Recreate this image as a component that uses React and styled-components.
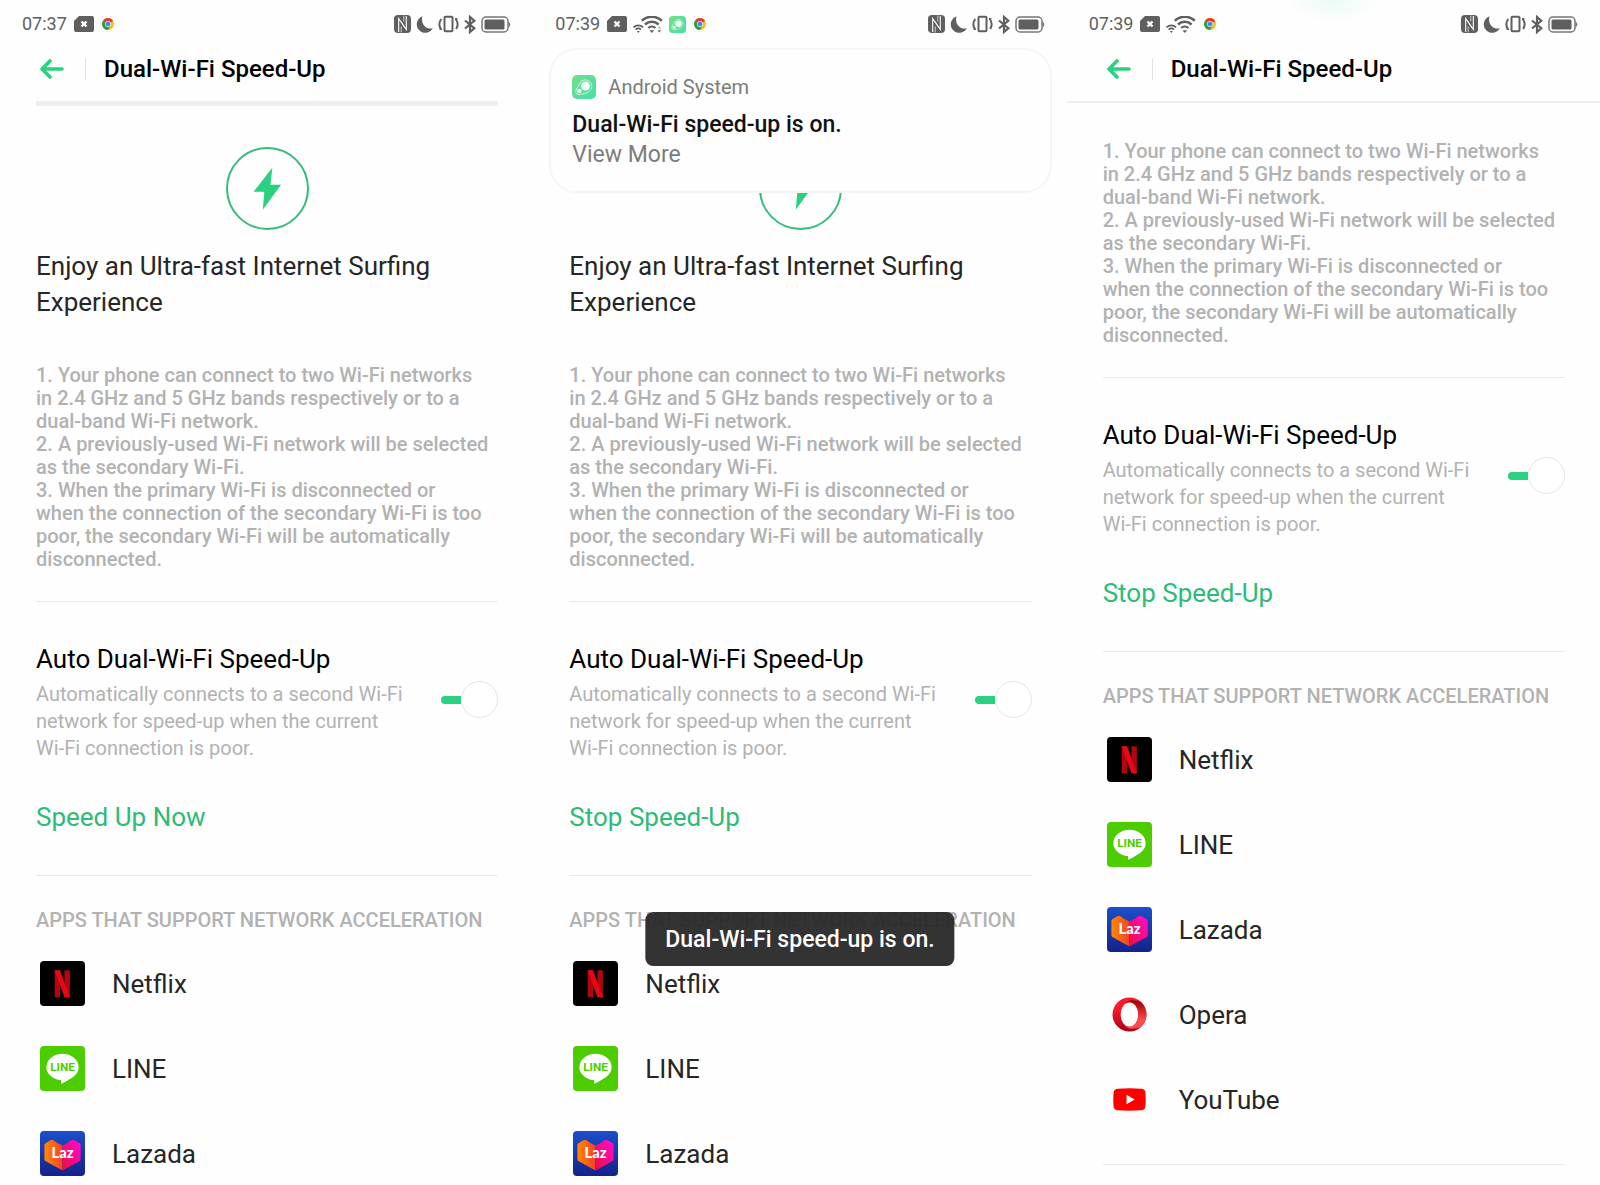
import React from "react";
import styled, { createGlobalStyle, css } from "styled-components";

const GlobalStyle = createGlobalStyle`
  * {
    box-sizing: border-box;
  }

  body {
    margin: 0;
    background: #fefefe;
    color: #000;
    font-family: Roboto, "Liberation Sans", sans-serif;
  }

  h1, h2, h3, p, ul {
    margin: 0;
    padding: 0;
    font-weight: 400;
  }

  button {
    padding: 0;
    border: 0;
    background: none;
    font-family: inherit;
    cursor: pointer;
  }

  svg {
    display: block;
    flex: none;
  }
`;

const Page = styled.main`
  display: grid;
  grid-template-columns: repeat(3, minmax(0, 1fr));
`;

const Screen = styled.section`
  position: relative;
  min-width: 0;
`;

const StatusBar = styled.div`
  display: flex;
  align-items: center;
  justify-content: space-between;
  height: 48px;
  padding: 0 22px;
  color: #5f5f5f;

  ${({ $glow }) =>
    $glow &&
    css`
      background: radial-gradient(48px 22px at 50% 0, #ebfbf4, #fefefe);
    `}
`;

const StatusLeft = styled.div`
  display: flex;
  align-items: center;
  gap: 6px;
`;

const StatusRight = styled.div`
  display: flex;
  align-items: center;
  gap: 5px;
`;

const Clock = styled.time`
  margin-right: 1px;
  font-size: 18px;
  line-height: 24px;
`;

const AppBar = styled.header`
  display: flex;
  align-items: center;
  height: 53px;
  padding: 0 36px 12px 39px;
`;

const BackButton = styled.button`
  display: flex;
  align-items: center;
  padding-right: 21px;
  border-right: 1px solid #e2e2e2;
  height: 22px;
  margin-right: 18px;
`;

const AppTitle = styled.h1`
  font-size: 24px;
  font-weight: 500;
  line-height: 28px;
`;

const BarRule = styled.div`
  height: ${({ $wide }) => ($wide ? "2px" : "5px")};
  margin: ${({ $wide }) => ($wide ? "0" : "0 35px 0 36px")};
  background: #eee;
`;

const Content = styled.div`
  padding: ${({ $scrolled }) => ($scrolled ? "36px" : "41px")} 35px 0 36px;
`;

const Hero = styled.div`
  display: flex;
  flex-direction: column;
  align-items: center;
  gap: 18px;
  margin-bottom: 43px;
`;

const HeroTitle = styled.h2`
  align-self: stretch;
  color: #262626;
  font-size: 26px;
  line-height: 36px;
`;

const Notes = styled.p`
  padding-top: 1px;
  padding-bottom: 30px;
  color: #b2b2b2;
  font-size: 20px;
  font-weight: 500;
  line-height: 23px;
  white-space: pre-line;
`;

const SpeedSection = styled.div`
  padding: 39px 0 40px;
  border: solid #e9e9e9;
  border-width: 1px 0;
`;

const SettingRow = styled.label`
  display: flex;
  align-items: center;
  justify-content: space-between;
  margin-bottom: 37px;
`;

const SettingText = styled.span`
  display: flex;
  flex-direction: column;
  gap: 4px;
`;

const SettingName = styled.span`
  font-size: 26px;
  line-height: 36px;
`;

const SettingHint = styled.span`
  color: #b2b2b2;
  font-size: 20px;
  line-height: 27px;
  white-space: pre-line;
`;

const Toggle = styled.input.attrs({ type: "checkbox" })`
  appearance: none;
  display: flex;
  align-items: center;
  flex: none;
  width: 57px;
  height: 35px;
  margin: 0 0 4px;

  &::before {
    content: "";
    flex: 1;
    height: 8px;
    border-radius: 4px 0 0 4px;
    background: #2ad181;
  }

  &::after {
    content: "";
    width: 35px;
    height: 35px;
    border: 1px solid #e4e4e4;
    border-radius: 50%;
    background: #fff;
  }
`;

const ActionButton = styled.button`
  display: block;
  color: #2dbb78;
  font-size: 26px;
  line-height: 36px;
`;

const ListTitle = styled.h3`
  padding-top: 31px;
  margin-bottom: 27px;
  color: #b2b2b2;
  font-size: 20px;
  font-weight: 500;
  line-height: 27px;
  white-space: nowrap;
`;

const AppList = styled.ul`
  display: flex;
  flex-direction: column;
  gap: 40px;
  padding: 0 4px;
  list-style: none;
`;

const AppRow = styled.li`
  display: flex;
  align-items: center;
  gap: 27px;
  height: 45px;
  color: #262626;
  font-size: 26px;
  line-height: 36px;
`;

const EndRule = styled.div`
  height: 1px;
  margin-top: 42px;
  background: #e9e9e9;
`;

const NotificationCard = styled.aside`
  position: absolute;
  top: 48px;
  left: 16px;
  right: 15px;
  height: 145px;
  padding: 24px 21px;
  border: 2px solid #f5f5f5;
  border-radius: 28px;
  background: #fefefe;
`;

const NotificationSource = styled.div`
  display: flex;
  align-items: center;
  gap: 12px;
  margin-bottom: 10px;
  color: #7c7c7c;
  font-size: 20px;
  line-height: 26px;
`;

const NotificationTitle = styled.p`
  color: #111;
  font-size: 23px;
  font-weight: 500;
  line-height: 30px;
`;

const MoreLink = styled.a`
  display: block;
  color: #7c7c7c;
  font-size: 23px;
  line-height: 30px;
  text-decoration: none;
`;

const Toast = styled.div`
  position: absolute;
  top: 912px;
  left: 50%;
  transform: translateX(-50%);
  padding: 13px 20px 11px;
  border-radius: 8px;
  background: rgba(40, 40, 40, 0.95);
  color: #fff;
  font-size: 23px;
  font-weight: 500;
  line-height: 30px;
  white-space: nowrap;
`;

/* ---------- status icons ---------- */

const SimIcon = () => (
  <svg width="20" height="16" viewBox="0 0 20 16">
    <path d="M5 0H18a2 2 0 0 1 2 2V14a2 2 0 0 1-2 2H2a2 2 0 0 1-2-2V5Z" fill="#5f5f5f" />
    <path d="M7.5 5.5l5 5M12.5 5.5l-5 5" stroke="#fff" strokeWidth="2.4" />
  </svg>
);

const WifiIcon = ({ active }) => (
  <svg width="30" height="17" viewBox="0 0 30 17" fill="none" stroke="#5f5f5f">
    <path d="M8.800 4.800a14.500 14.500 0 0 1 20 0" strokeWidth="2.600" />
    <path d="M12 8.500a9.800 9.800 0 0 1 13.600 0" strokeWidth="2.500" />
    <path d="M15.200 12a5.200 5.200 0 0 1 7.200 0" strokeWidth="2.300" />
    <path d="M16.400 14.200h4.800l-2.400 2.800Z" fill="#5f5f5f" stroke="none" />
    <path d="M.5 11.400a6.800 6.800 0 0 1 9.600 0M2.600 13.600a4 4 0 0 1 5.400 0" strokeWidth="1.600" />
    <path d="M3.800 15h3L5.300 16.900Z" fill="#5f5f5f" stroke="none" />
    {active && <path d="M24.600 12.400l1.800-2 1.800 2Z" fill="#aaa" stroke="none" />}
    {active && <path d="M24.600 14.200h3.600l-1.800 2.300Z" fill="#5f5f5f" stroke="none" />}
  </svg>
);

const ChromeIcon = () => (
  <svg width="16" height="16" viewBox="0 0 16 16">
    <rect x=".5" y=".5" width="15" height="15" rx="3" fill="#fff" stroke="#f6f6f6" />
    <circle cx="8" cy="8" r="6" fill="#fbc116" />
    <path d="M8 8L2.800 5A6 6 0 0 1 13.200 5Z" fill="#e33b2e" />
    <path d="M8 8L2.800 5A6 6 0 0 0 8 14L10.600 9.500Z" fill="#2a9c4a" />
    <circle cx="8" cy="8" r="2.900" fill="#e4ecf8" />
    <circle cx="8" cy="8" r="2.300" fill="#4285f4" />
  </svg>
);

const SystemIcon = ({ size }) => (
  <svg width={size} height={size} viewBox="0 0 24 24">
    <defs>
      <linearGradient id="system-green" x1="0" y1="0" x2="1" y2="1">
        <stop offset="0" stopColor="#74de86" />
        <stop offset="1" stopColor="#45dfaa" />
      </linearGradient>
    </defs>
    <rect width="24" height="24" rx="5" fill="url(#system-green)" />
    <path
      d="M9.500 5.900C13 3.700 18.800 5.400 19.700 9.900c.9 4.300-2.600 7.300-6 8.200l-5.500 1.400C4.700 20 3 17.300 4.300 14.300Z"
      fill="none"
      stroke="#c9f7dc"
      strokeWidth="1"
    />
    <circle cx="13.500" cy="11" r="4.500" fill="#f2fff7" />
    <circle cx="7.300" cy="15.900" r="2.200" fill="#f2fff7" />
  </svg>
);

const NfcIcon = () => (
  <svg width="17" height="18" viewBox="0 0 17 18">
    <rect width="17" height="18" rx="4" fill="#5f5f5f" />
    <path
      d="M4.700 17V3.500L10.700 12.500M12.300 1V14.500L6.800 6.200"
      fill="none"
      stroke="#fefefe"
      strokeWidth="1.100"
    />
    <path d="M7.200 17.500V11.500M9.800 .5V6.500" stroke="#fefefe" strokeWidth=".7" />
  </svg>
);

const MoonIcon = () => (
  <svg width="17" height="17" viewBox="0 0 17 17">
    <path d="M6.500.3A8.500 8.500 0 1 0 16.800 12.300C10.500 14 4.300 8 6.500.3Z" fill="#5f5f5f" />
  </svg>
);

const VibrateIcon = () => (
  <svg width="21" height="18" viewBox="0 0 21 18" fill="none" stroke="#5f5f5f" strokeWidth="2">
    <rect x="6.500" y="1.800" width="8" height="14.400" rx="1" />
    <path d="M3.300 4C1 7 1 11 2.800 14M17.700 4c2.300 3 2.300 7 .5 10" />
    <path d="M1.600 14.200h2.400M17 3.800h2.400" strokeWidth="1.600" />
  </svg>
);

const BluetoothIcon = () => (
  <svg width="12" height="19" viewBox="0 0 12 19" fill="none" stroke="#5f5f5f" strokeWidth="2.200">
    <path d="M1 5.500L10.300 13.200 6 17V2l4.300 3.800L1 13.500" />
  </svg>
);

const BatteryIcon = () => (
  <svg width="30" height="17" viewBox="0 0 30 17">
    <rect x="1" y="1" width="26" height="15" rx="4" fill="none" stroke="#767676" strokeWidth="1.500" />
    <rect x="3.500" y="3.500" width="20" height="10" rx="1.500" fill="#5f5f5f" />
    <path d="M28 6.500q1.600 2 0 4Z" fill="#767676" stroke="#767676" />
  </svg>
);

const BackArrow = () => (
  <svg width="25" height="20" viewBox="0 0 25 20">
    <path
      d="M11 2L3 10l8 8M3.500 10H23"
      fill="none"
      stroke="#2ad181"
      strokeWidth="3.600"
      strokeLinecap="round"
      strokeLinejoin="round"
    />
  </svg>
);

const BoltBadge = () => (
  <svg width="83" height="83" viewBox="0 0 83 83">
    <circle cx="41.500" cy="41.500" r="40.500" fill="none" stroke="#35bb7c" strokeWidth="2" />
    <path d="M46.300 20.800L44.500 37.800H55.100L36.800 62.800 38.300 44.800H27.600Z" fill="#2ad181" />
  </svg>
);

/* ---------- app logos ---------- */

const NetflixLogo = () => (
  <svg width="45" height="45" viewBox="0 0 46 46">
    <rect width="46" height="46" rx="4" fill="#000" />
    <rect x="15" y="9.500" width="5.500" height="27.500" fill="#b1060f" />
    <rect x="25" y="9.500" width="5.500" height="27.500" fill="#b1060f" />
    <rect
      x="20"
      y="9.500"
      width="5.500"
      height="27.500"
      fill="#e50914"
      transform="translate(-8.450 0) skewX(20)"
    />
  </svg>
);

const LineLogo = () => (
  <svg width="45" height="45" viewBox="0 0 46 46">
    <rect width="46" height="46" rx="4" fill="#4ccd00" />
    <ellipse cx="23" cy="21.500" rx="16.500" ry="13.500" fill="#fff" />
    <path d="M21 34c1 1 .8 2.500.4 4.500C27 36.500 33 32.500 36.500 28.500L22 31Z" fill="#fff" />
    <text
      x="23"
      y="26"
      textAnchor="middle"
      fill="#4ccd00"
      fontFamily="Roboto"
      fontSize="12"
      fontWeight="700"
    >
      LINE
    </text>
  </svg>
);

const LazadaLogo = () => (
  <svg width="45" height="45" viewBox="0 0 46 46">
    <defs>
      <linearGradient id="laz-bg" x1="0" y1="0" x2="0" y2="1">
        <stop offset="0" stopColor="#1b4fc9" />
        <stop offset="1" stopColor="#14228a" />
      </linearGradient>
      <linearGradient id="laz-left" x1="0" y1="0" x2="1" y2="0">
        <stop offset="0" stopColor="#ff8a00" />
        <stop offset="1" stopColor="#f4402a" />
      </linearGradient>
      <linearGradient id="laz-right" x1="0" y1="1" x2="1" y2="0">
        <stop offset="0" stopColor="#ee0a3f" />
        <stop offset="1" stopColor="#ff0cd0" />
      </linearGradient>
    </defs>
    <rect width="46" height="46" rx="4" fill="url(#laz-bg)" />
    <path d="M23 14.800Q18.500 13.500 13.500 9.200 12 8.700 10.500 9.500L5.500 12.500Q4.500 13.200 4.500 14.500V29Q4.500 30 5.500 30.700L23 40.500Z" fill="url(#laz-left)" />
    <path d="M23 14.800Q27.500 13.500 32.500 9.200 34 8.700 35.500 9.500L40.500 12.500Q41.500 13.200 41.500 14.500V29Q41.500 30 40.500 30.700L23 40.500Z" fill="url(#laz-right)" />
    <text
      x="23"
      y="28"
      textAnchor="middle"
      fill="#fff"
      fontFamily="Lato"
      fontSize="15"
      fontWeight="900"
    >
      Laz
    </text>
  </svg>
);

const OperaLogo = () => (
  <svg width="45" height="45" viewBox="0 0 45 45">
    <defs>
      <linearGradient id="opera-ring" x1="0" y1="0" x2="0" y2="1">
        <stop offset="0.300" stopColor="#fa1a2c" />
        <stop offset="1" stopColor="#a70014" />
      </linearGradient>
      <linearGradient id="opera-lobe" x1="0" y1="0" x2="0" y2="1">
        <stop offset="0" stopColor="#9c0000" />
        <stop offset="0.700" stopColor="#ff4b4b" />
      </linearGradient>
    </defs>
    <path
      d="M22.500 5.500a17 17 0 1 0 0 34a17 17 0 1 0 0-34ZM22.500 10.300a8.800 12.200 0 1 1 0 24.400a8.800 12.200 0 1 1 0-24.400Z"
      fill="url(#opera-ring)"
      fillRule="evenodd"
    />
    <path
      d="M16.500 13C19 9.500 22 8.300 25 8.300 28.500 8.300 31.500 9 34 10A17 17 0 0 1 34 35C31.500 36 28.500 36.700 25 36.700 22 36.700 19 35.500 16.500 32 18 34 20 34.700 22.500 34.700A8.800 12.200 0 0 0 22.500 10.300C20 10.300 18 11 16.500 13Z"
      fill="url(#opera-lobe)"
    />
  </svg>
);

const YouTubeLogo = () => (
  <svg width="45" height="45" viewBox="0 0 46 46">
    <path
      d="M11 11.900Q23 11 35 11.900 39 12.200 39.300 16 39.900 23 39.300 30 39 33.800 35 34.100 23 35 11 34.100 7 33.800 6.700 30 6.100 23 6.700 16 7 12.200 11 11.900Z"
      fill="#f00"
    />
    <path d="M20 18.200L28.300 23 20 27.800Z" fill="#fff" />
  </svg>
);

const APPS = [
  { name: "Netflix", Logo: NetflixLogo },
  { name: "LINE", Logo: LineLogo },
  { name: "Lazada", Logo: LazadaLogo },
  { name: "Opera", Logo: OperaLogo },
  { name: "YouTube", Logo: YouTubeLogo },
];

const NOTES = `1. Your phone can connect to two Wi-Fi networks
in 2.4 GHz and 5 GHz bands respectively or to a
dual-band Wi-Fi network.
2. A previously-used Wi-Fi network will be selected
as the secondary Wi-Fi.
3. When the primary Wi-Fi is disconnected or
when the connection of the secondary Wi-Fi is too
poor, the secondary Wi-Fi will be automatically
disconnected.`;

const HINT = `Automatically connects to a second Wi-Fi
network for speed-up when the current
Wi-Fi connection is poor.`;

const Status = ({ time, wifi, active, system, glow }) => (
  <StatusBar $glow={glow}>
    <StatusLeft>
      <Clock>{time}</Clock>
      <SimIcon />
      {wifi && <WifiIcon active={active} />}
      {system && <SystemIcon size={17} />}
      <ChromeIcon />
    </StatusLeft>
    <StatusRight>
      <NfcIcon />
      <MoonIcon />
      <VibrateIcon />
      <BluetoothIcon />
      <BatteryIcon />
    </StatusRight>
  </StatusBar>
);

const TopBar = () => (
  <AppBar>
    <BackButton type="button" aria-label="Back">
      <BackArrow />
    </BackButton>
    <AppTitle>Dual-Wi-Fi Speed-Up</AppTitle>
  </AppBar>
);

const Settings = ({ scrolled, action, count }) => (
  <Content $scrolled={scrolled}>
    {!scrolled && (
      <Hero>
        <BoltBadge />
        <HeroTitle>Enjoy an Ultra-fast Internet Surfing Experience</HeroTitle>
      </Hero>
    )}
    <Notes>{NOTES}</Notes>
    <SpeedSection>
      <SettingRow>
        <SettingText>
          <SettingName>Auto Dual-Wi-Fi Speed-Up</SettingName>
          <SettingHint>{HINT}</SettingHint>
        </SettingText>
        <Toggle defaultChecked />
      </SettingRow>
      <ActionButton type="button">{action}</ActionButton>
    </SpeedSection>
    <ListTitle>APPS THAT SUPPORT NETWORK ACCELERATION</ListTitle>
    <AppList>
      {APPS.slice(0, count).map(({ name, Logo }) => (
        <AppRow key={name}>
          <Logo />
          {name}
        </AppRow>
      ))}
    </AppList>
    {scrolled && <EndRule />}
  </Content>
);

const App = () => {
  return (
    <>
      <GlobalStyle />
      <Page>
        <Screen>
          <Status time="07:37" />
          <TopBar />
          <BarRule />
          <Settings action="Speed Up Now" count={3} />
        </Screen>

        <Screen>
          <Status time="07:39" wifi active system />
          <AppBar />
          <BarRule />
          <Settings action="Stop Speed-Up" count={3} />
          <NotificationCard>
            <NotificationSource>
              <SystemIcon size={24} />
              Android System
            </NotificationSource>
            <NotificationTitle>Dual-Wi-Fi speed-up is on.</NotificationTitle>
            <MoreLink href="#more">View More</MoreLink>
          </NotificationCard>
          <Toast role="status">Dual-Wi-Fi speed-up is on.</Toast>
        </Screen>

        <Screen>
          <Status time="07:39" wifi glow />
          <TopBar />
          <BarRule $wide />
          <Settings scrolled action="Stop Speed-Up" count={5} />
        </Screen>
      </Page>
    </>
  );
};

export default App;
